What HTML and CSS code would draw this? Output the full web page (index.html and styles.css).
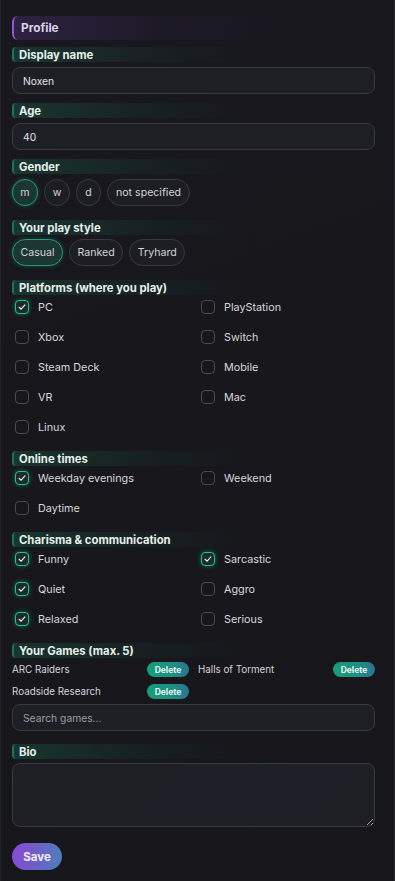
FILE: index.html
```html
<!DOCTYPE html>
<html>
<head>
<meta charset="utf-8">
<link rel="stylesheet" href="styles.css">
</head>
<body>
<div class="card">
  <div class="profile-head">Profile</div>

  <div class="section gap-s">
    <div class="label wide-gap">Display name</div>
    <input class="field" type="text" value="Noxen">
  </div>

  <div class="section gap-s">
    <div class="label wide-gap">Age</div>
    <input class="field" type="text" value="40">
  </div>

  <div class="section gap-l">
    <div class="label wide-gap">Gender</div>
    <div class="pills">
      <span class="pill round active">m</span>
      <span class="pill round">w</span>
      <span class="pill round">d</span>
      <span class="pill">not specified</span>
    </div>
  </div>

  <div class="section gap-l">
    <div class="label">Your play style</div>
    <div class="pills">
      <span class="pill wide active">Casual</span>
      <span class="pill wide">Ranked</span>
      <span class="pill wide">Tryhard</span>
    </div>
  </div>

  <div class="section gap-l">
    <div class="label tight">Platforms (where you play)</div>
    <div class="checks">
      <div class="check on"><span class="box"><svg viewBox="0 0 14 14"><polyline points="3.6,7.3 6,9.6 10.4,4.6"/></svg></span>PC</div>
      <div class="check"><span class="box"></span>PlayStation</div>
      <div class="check"><span class="box"></span>Xbox</div>
      <div class="check"><span class="box"></span>Switch</div>
      <div class="check"><span class="box"></span>Steam Deck</div>
      <div class="check"><span class="box"></span>Mobile</div>
      <div class="check"><span class="box"></span>VR</div>
      <div class="check"><span class="box"></span>Mac</div>
      <div class="check"><span class="box"></span>Linux</div>
    </div>
  </div>

  <div class="section gap-l">
    <div class="label tight">Online times</div>
    <div class="checks">
      <div class="check on"><span class="box"><svg viewBox="0 0 14 14"><polyline points="3.6,7.3 6,9.6 10.4,4.6"/></svg></span>Weekday evenings</div>
      <div class="check"><span class="box"></span>Weekend</div>
      <div class="check"><span class="box"></span>Daytime</div>
    </div>
  </div>

  <div class="section gap-l">
    <div class="label tight">Charisma &amp; communication</div>
    <div class="checks">
      <div class="check on"><span class="box"><svg viewBox="0 0 14 14"><polyline points="3.6,7.3 6,9.6 10.4,4.6"/></svg></span>Funny</div>
      <div class="check on"><span class="box"><svg viewBox="0 0 14 14"><polyline points="3.6,7.3 6,9.6 10.4,4.6"/></svg></span>Sarcastic</div>
      <div class="check on"><span class="box"><svg viewBox="0 0 14 14"><polyline points="3.6,7.3 6,9.6 10.4,4.6"/></svg></span>Quiet</div>
      <div class="check"><span class="box"></span>Aggro</div>
      <div class="check on"><span class="box"><svg viewBox="0 0 14 14"><polyline points="3.6,7.3 6,9.6 10.4,4.6"/></svg></span>Relaxed</div>
      <div class="check"><span class="box"></span>Serious</div>
    </div>
  </div>

  <div class="section gap-m">
    <div class="label">Your Games (max. 5)</div>
    <div class="games">
      <div class="game"><span>ARC Raiders</span><span class="del">Delete</span></div>
      <div class="game"><span>Halls of Torment</span><span class="del">Delete</span></div>
      <div class="game"><span>Roadside Research</span><span class="del">Delete</span></div>
    </div>
    <input class="field search" type="text" placeholder="Search games...">
  </div>

  <div class="section gap-xl">
    <div class="label">Bio</div>
    <textarea class="bio"></textarea>
  </div>

  <button class="save">Save</button>
</div>
</body>
</html>
```

FILE: styles.css
```css
* { box-sizing: border-box; }
html, body {
  margin: 0;
  padding: 0;
  background: #17171c;
  font-family: Inter, "Noto Sans", sans-serif;
  color: #d6d6dc;
}
.card {
  width: 395px;
  min-height: 881px;
  padding: 16px 19px 20px 11px;
  border-left: 1px solid #23232a;
  border-right: 1px solid #2a2a31;
  background: linear-gradient(160deg, #19181f 0%, #17171c 40%, #16161b 100%);
}
.profile-head {
  height: 24px;
  display: flex;
  align-items: center;
  padding-left: 7px;
  margin-bottom: 7px;
  border-left: 2px solid #9a55e0;
  border-radius: 6px;
  background: linear-gradient(90deg, rgba(120, 70, 190, 0.22) 0%, rgba(60, 40, 100, 0.12) 40%, rgba(23, 23, 28, 0) 75%);
  font-size: 11.8px;
  font-weight: 700;
  color: #d9d2ea;
}
.section { display: flex; flex-direction: column; }
.gap-s { margin-bottom: 9px; }
.gap-l { margin-bottom: 14px; }
.gap-m { margin-bottom: 13px; }
.gap-xl { margin-bottom: 16px; }
.label {
  height: 15px;
  display: flex;
  align-items: center;
  padding-left: 5px;
  margin-bottom: 4px;
  border-left: 2px solid #1d7357;
  border-radius: 4px;
  background: linear-gradient(90deg, rgba(26, 96, 72, 0.42) 0%, rgba(24, 70, 60, 0.2) 35%, rgba(23, 23, 28, 0) 65%);
  font-size: 11.3px;
  font-weight: 700;
  color: #e6f0ea;
}
.label.wide-gap { margin-bottom: 5px; }
.label.tight { margin-bottom: 2px; }
.field {
  height: 27px;
  width: 100%;
  padding: 0 10px;
  border: 1px solid #393a41;
  border-radius: 8px;
  background: #1e1f25;
  color: #e2e2e8;
  font-family: Inter, "Noto Sans", sans-serif;
  font-size: 10.3px;
  outline: none;
}
.field::placeholder { color: #9c9ca6; }
.search { margin-top: 5px; }
.pills { display: flex; gap: 6px; }
.pill {
  height: 27px;
  display: flex;
  align-items: center;
  justify-content: center;
  padding: 0 8px;
  border: 1px solid #393a41;
  border-radius: 14px;
  background: #1d1e24;
  font-size: 10.6px;
  color: #d2d2d9;
}
.pill.round { width: 26px; padding: 0; }
.pill.round:nth-child(3) { width: 25px; }
.pill.wide { padding: 0 7.5px; }
.pill.active {
  border: 1.5px solid #1f9e77;
  background: #1c3633;
  box-shadow: 0 0 5px rgba(31, 170, 125, 0.35);
}
.checks {
  display: grid;
  grid-template-columns: 1fr 1fr;
  column-gap: 9px;
  row-gap: 10px;
}
.check {
  height: 20px;
  display: flex;
  align-items: center;
  gap: 9px;
  padding-left: 3px;
  font-size: 10.8px;
  color: #d8d8de;
}
.box {
  width: 14px;
  height: 14px;
  flex: none;
  border: 1px solid #4a4a52;
  border-radius: 4px;
  display: flex;
  align-items: center;
  justify-content: center;
}
.check.on .box {
  border: 1.5px solid #21c48e;
  background: #1b2c2b;
  box-shadow: 0 0 5px rgba(33, 196, 142, 0.45);
}
.box svg { width: 12px; height: 12px; }
.box polyline {
  fill: none;
  stroke: #f2f2f4;
  stroke-width: 1.3;
  stroke-linecap: round;
  stroke-linejoin: round;
}
.games {
  display: grid;
  grid-template-columns: 1fr 1fr;
  column-gap: 9px;
  row-gap: 7px;
}
.game {
  height: 15px;
  display: flex;
  align-items: center;
  justify-content: space-between;
  font-size: 9.8px;
  color: #d4d4da;
}
.game span:first-child { margin-top: -1px; }
.del {
  height: 15px;
  width: 42px;
  display: flex;
  align-items: center;
  justify-content: center;
  border-radius: 8px;
  background: linear-gradient(90deg, #169e78 0%, #1d8f85 60%, #2a7494 100%);
  color: #eaf6f2;
  font-size: 8.5px;
  font-weight: 700;
}
.bio {
  height: 64px;
  width: 100%;
  margin: 0;
  border: 1px solid #393a41;
  border-radius: 8px;
  background: linear-gradient(135deg, #1f2025 0%, #1d1f26 60%, #1e1f25 100%);
  resize: vertical;
  outline: none;
  color: #e2e2e8;
}
.save {
  height: 27px;
  width: 50px;
  margin: 0;
  padding: 0;
  border: none;
  border-radius: 14px;
  background: linear-gradient(100deg, #8b48d6 0%, #6a62c4 55%, #4784bd 100%);
  color: #f3eefb;
  font-family: Inter, "Noto Sans", sans-serif;
  font-size: 11.5px;
  font-weight: 700;
}
```
